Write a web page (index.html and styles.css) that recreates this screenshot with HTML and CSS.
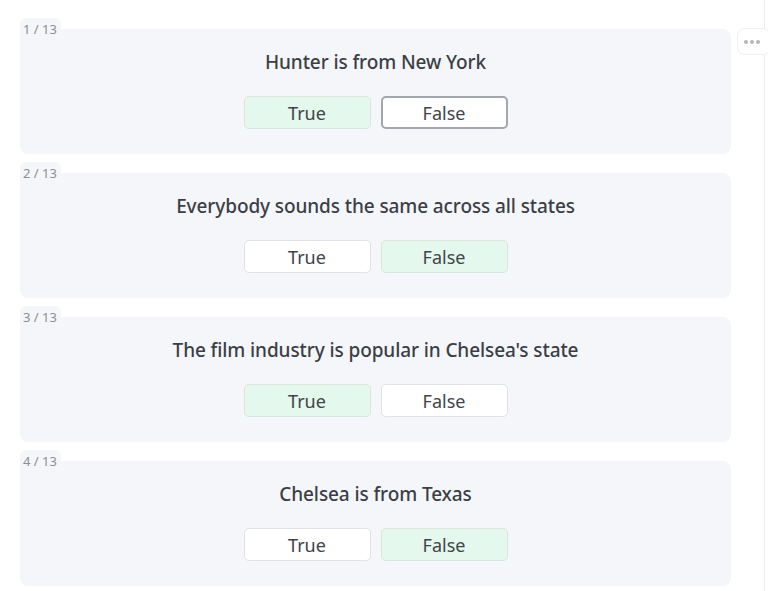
FILE: index.html
```html
<!DOCTYPE html>
<html lang="en">
<head>
    <meta charset="UTF-8">
    <meta name="viewport" content="width=device-width, initial-scale=1.0">
    <title>Quiz - True or False</title>
    <link rel="stylesheet" href="styles.css">
</head>
<body>
    <div class="page">
        <div class="quiz">
            <div class="card">
                <span class="step">1 / 13</span>
                <p class="question">Hunter is from New York</p>
                <div class="answers">
                    <button class="answer picked">True</button>
                    <button class="answer focused">False</button>
                </div>
            </div>
            <div class="card">
                <span class="step">2 / 13</span>
                <p class="question">Everybody sounds the same across all states</p>
                <div class="answers">
                    <button class="answer">True</button>
                    <button class="answer picked">False</button>
                </div>
            </div>
            <div class="card">
                <span class="step">3 / 13</span>
                <p class="question">The film industry is popular in Chelsea's state</p>
                <div class="answers">
                    <button class="answer picked">True</button>
                    <button class="answer">False</button>
                </div>
            </div>
            <div class="card">
                <span class="step">4 / 13</span>
                <p class="question">Chelsea is from Texas</p>
                <div class="answers">
                    <button class="answer">True</button>
                    <button class="answer picked">False</button>
                </div>
            </div>
        </div>
        <div class="side">
            <button class="more"><span></span><span></span><span></span></button>
        </div>
    </div>
</body>
</html>
```

FILE: styles.css
```css
body {
    margin: 0;
    background-color: #ffffff;
    font-family: "Noto Sans", Arial, sans-serif;
    color: #3b3e46;
    overflow: hidden;
}
.page {
    display: flex;
    align-items: flex-start;
    padding: 29px 0 0 20px;
    height: 591px;
    width: 765px;
    box-sizing: border-box;
    border-right: 1px solid #ececee;
}
.quiz {
    flex-shrink: 0;
    width: 711px;
    display: flex;
    flex-direction: column;
    gap: 19px;
}
.card {
    position: relative;
    background-color: #f5f6f9;
    border-radius: 8px;
    height: 125px;
    box-sizing: border-box;
    padding-top: 21px;
    text-align: center;
}
.step {
    position: absolute;
    left: 0;
    top: -11px;
    padding: 3px 4px 0 3px;
    background-color: #f5f6f9;
    border-radius: 6px 6px 0 0;
    font-size: 13px;
    line-height: 16px;
    color: #8b8e94;
}
.question {
    margin: 0;
    font-size: 19px;
    font-weight: 500;
    line-height: 24px;
    letter-spacing: -0.1px;
}
.answers {
    display: flex;
    justify-content: center;
    gap: 10px;
    margin-top: 22px;
}
.answer {
    width: 127px;
    height: 33px;
    box-sizing: border-box;
    border: 1px solid #dfe2e6;
    border-radius: 5px;
    background-color: #ffffff;
    font-family: "Noto Sans", Arial, sans-serif;
    font-size: 18px;
    color: #41444b;
    padding: 0;
}
.answer.picked {
    background-color: #e5f8ed;
    border-color: #d9e6de;
}
.answer.focused {
    border: 2px solid #a3a6ac;
}
.side {
    flex-shrink: 0;
    padding-left: 6px;
}
.more {
    display: flex;
    align-items: center;
    gap: 2px;
    width: 34px;
    height: 27px;
    margin-top: -1px;
    padding: 0 0 0 6px;
    border: 1px solid #efeff2;
    border-radius: 8px;
    background-color: #ffffff;
}
.more span {
    width: 4px;
    height: 4px;
    border-radius: 50%;
    background-color: #b4b6bb;
}
```
